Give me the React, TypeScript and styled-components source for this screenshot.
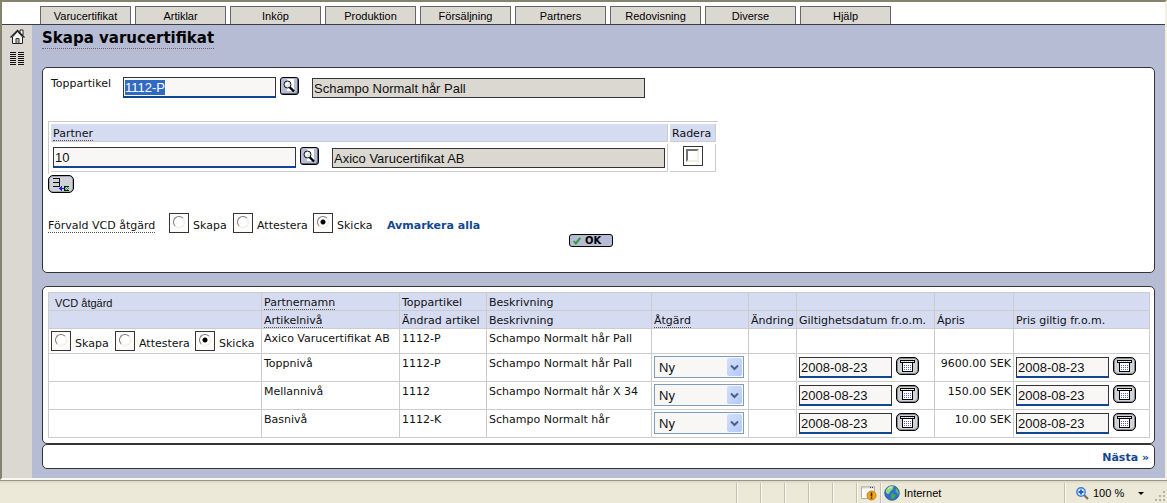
import React, { useEffect, useRef } from "react";
import styled, { createGlobalStyle } from "styled-components";

const sans = `"Liberation Sans", Arial, sans-serif`;
const wide = `"DejaVu Sans", Verdana, sans-serif`;
const ink = "#333338";
const line = "#cccccc";

const GlobalStyle = createGlobalStyle`
  *, *::before, *::after { box-sizing: border-box; }
  body { margin: 0; background: #ffffff; font-family: ${wide}; font-size: 11px; line-height: 14px; color: #111111; }
  ::selection { background: #316ac5; color: #ffffff; }
`;

const Page = styled.div`
  min-height: 100vh;
  display: flex;
  flex-direction: column;
`;

const Frame = styled.div`
  flex: 1;
  display: flex;
  flex-direction: column;
  border-top: 2px solid #85826f;
  border-left: 2px solid #85826f;
  border-right: 2px solid #f1efe2;
  border-bottom: 2px solid #f8f7f0;
`;

const TabBar = styled.nav`
  display: flex;
  gap: 4px;
  padding: 4px 0 0 38px;
  border-bottom: 1px solid #3c3c46;
`;

const Tab = styled.a`
  width: 91px;
  height: 18px;
  border: 1px solid #666666;
  border-bottom: 0;
  background: #dbd8d1;
  color: #000000;
  font-family: ${sans};
  line-height: 19px;
  text-align: center;
  text-decoration: none;
`;

const Body = styled.div`
  flex: 1;
  display: flex;
`;

const Sidebar = styled.aside`
  width: 30px;
  display: flex;
  flex-direction: column;
  align-items: center;
  gap: 8px;
  padding-top: 4px;
  background: #dbd8d1;
`;

const SideLink = styled.a`
  display: block;
  height: 15px;
  svg { display: block; }
`;

const Main = styled.main`
  flex: 1;
  min-width: 0;
  padding: 4px 10px 9px;
  background: #b6bcd3;
`;

const Title = styled.h1`
  width: fit-content;
  margin: 0 0 18px;
  border-bottom: 1px dotted #666666;
  color: #000000;
  font-size: 15px;
  font-weight: bold;
  line-height: 19px;
`;

const Panel = styled.section<{ $gap?: number }>`
  margin-bottom: ${(p) => p.$gap ?? 0}px;
  padding: 5px;
  border: 1px solid ${ink};
  border-radius: 5px;
  background: #ffffff;
`;

const FormBody = styled.form`
  padding: 4px 0 20px;
`;

const FieldRow = styled.div`
  display: flex;
  align-items: flex-start;
`;

const TopRow = styled(FieldRow)`
  margin-bottom: 23px;
  padding-left: 3px;
`;

const FieldLabel = styled.label`
  width: 72px;
`;

const TextInput = styled.input<{ $width: number }>`
  width: ${(p) => p.$width}px;
  height: 21px;
  padding: 0 1px;
  border: 1px solid ${ink};
  border-bottom: 2px solid #11478f;
  border-radius: 0;
  outline: none;
  background: #f8f7f6;
  color: #111111;
  font-family: ${sans};
  font-size: 13px;
`;

const ReadOnlyInput = styled.input`
  width: 333px;
  height: 20px;
  margin: 1px 0 0 13px;
  padding: 0 1px;
  border: 1px solid ${ink};
  border-radius: 0;
  outline: none;
  background: #dbd8d1;
  color: #111111;
  font-family: ${sans};
  font-size: 13px;
`;

const IconButton = styled.button<{ $width: number; $tone: string }>`
  flex: none;
  width: ${(p) => p.$width}px;
  height: 18px;
  display: flex;
  align-items: center;
  justify-content: center;
  padding: 0;
  border: 1px solid #000000;
  border-radius: 5px;
  background: ${(p) => p.$tone};
`;

const SearchButton = styled(IconButton)`
  margin-left: 4px;
  border-radius: 3px;
  box-shadow: inset -1px -1px 0 #5c6078;
`;

const CalendarButton = styled(IconButton)`
  margin-left: 4px;
  box-shadow: inset 0 0 0 1px #8b8b92;
`;

const PartnerTable = styled.table`
  border: 0 solid ${line};
  border-width: 1px 0 0 1px;
  border-spacing: 2px;
`;

const PartnerHead = styled.th`
  min-width: 46px;
  padding: 3px 2px 0;
  border: 0 solid ${line};
  border-width: 0 1px 1px 0;
  background: #d5dbf1;
  font-weight: normal;
  text-align: left;
`;

const PartnerCell = styled.td`
  padding: 3px 2px;
  border: 0 solid ${line};
  border-width: 0 1px 1px 0;
  vertical-align: top;
`;

const Term = styled.span`
  display: inline-block;
  border-bottom: 1px dotted #555555;
  line-height: 12px;
`;

const Check = styled.input`
  appearance: none;
  display: block;
  width: 20px;
  height: 20px;
  margin: -1px auto 0;
  padding: 2px;
  border: 1px solid ${ink};
  background: #ffffff;
  &::before {
    content: "";
    display: block;
    width: 13px;
    height: 13px;
    border: 2px solid #f1efe2;
    border-top-color: #76746a;
    border-left-color: #76746a;
  }
`;

const AddButton = styled(IconButton)`
  margin: 1px 0 20px;
  box-shadow: inset 0 0 0 1px #a4a6b0;
`;

const Choices = styled.div`
  display: flex;
  align-items: center;
  gap: 4px;
`;

const ChoiceText = styled.span<{ $width?: number }>`
  min-width: ${(p) => p.$width ?? 0}px;
  padding-top: 6px;
  line-height: 14px;
  white-space: nowrap;
`;

const ChoiceLabel = styled.label`
  display: flex;
  align-items: center;
  gap: 4px;
`;

const Radio = styled.input`
  appearance: none;
  width: 20px;
  height: 20px;
  margin: 0;
  padding: 2px 3px;
  border: 1px solid ${ink};
  background: #fcfbfa;
  &::before {
    content: "";
    display: block;
    width: 12px;
    height: 12px;
    border: 1px solid #efede2;
    border-top-color: #7c7a6e;
    border-left-color: #7c7a6e;
    border-radius: 50%;
    background: #ffffff;
  }
  &:checked::before {
    background: radial-gradient(circle at 5px 5px, #000000 2px, #ffffff 3px);
  }
`;

const ChoiceCaption = styled(ChoiceText)`
  margin-right: 4px;
`;

const ActionLink = styled.a`
  color: #14478f;
  font-weight: bold;
  text-decoration: none;
`;

const ClearLink = styled(ActionLink)`
  margin-left: 6px;
  padding-top: 6px;
`;

const SubmitRow = styled.div`
  display: flex;
  justify-content: center;
  padding: 1px 15px 0 0;
`;

const OkButton = styled.button`
  width: 44px;
  height: 13px;
  display: flex;
  align-items: center;
  gap: 4px;
  padding: 0 0 0 3px;
  border: 1px solid #000000;
  border-radius: 3px;
  background: #b6bcd3;
  color: #000000;
  font-family: ${wide};
  font-size: 10px;
  font-weight: bold;
  line-height: 11px;
`;

const DataTable = styled.table`
  width: 100%;
  table-layout: fixed;
  border-collapse: collapse;
  white-space: nowrap;
`;

const HeadCell = styled.th<{ $plain?: boolean }>`
  height: 18px;
  padding: 3px 2px 0 ${(p) => (p.$plain ? 6 : 2)}px;
  border: 1px solid ${line};
  background: #d5dbf1;
  font-family: ${(p) => (p.$plain ? sans : wide)};
  font-weight: normal;
  text-align: left;
`;

const Cell = styled.td<{ $right?: boolean }>`
  padding: 2px;
  border: 1px solid ${line};
  line-height: 16px;
  text-align: ${(p) => (p.$right ? "right" : "left")};
  vertical-align: top;
`;

const DateField = styled(FieldRow)`
  padding: 1px 0;
`;

const SelectBox = styled.div`
  display: flex;
  align-items: stretch;
  width: 90px;
  height: 22px;
  border: 1px solid #7f9db9;
  background: #f8f7f6;
  position: relative;
`;

const Select = styled.select`
  appearance: none;
  flex: 1;
  padding: 0 0 0 4px;
  border: 0;
  outline: none;
  background: transparent;
  color: #111111;
  font-family: ${sans};
  font-size: 13px;
`;

const SelectArrow = styled.span`
  position: absolute;
  inset: 1px 1px 1px auto;
  width: 15px;
  display: flex;
  align-items: center;
  justify-content: center;
  border-radius: 2px;
  background: linear-gradient(135deg, #d3e0fd, #b4c9f8);
  pointer-events: none;
`;

const PagerPanel = styled(Panel)`
  display: flex;
  justify-content: flex-end;
  padding: 6px 5px 3px;
`;

const StatusBar = styled.footer`
  height: 23px;
  display: flex;
  justify-content: flex-end;
  border-top: 1px solid #9a9788;
  background: linear-gradient(#d9d6c6, #ebe8d7 3px, #ece9d8);
  color: #000000;
  font-family: ${sans};
`;

const Segment = styled.div<{ $width: number }>`
  width: ${(p) => p.$width}px;
  display: flex;
  align-items: center;
  gap: 4px;
  margin-top: 2px;
  padding-left: 3px;
  border-left: 1px solid #c3c0b0;
  box-shadow: inset 1px 0 0 #fbfaf4;
`;

const ZoomSegment = styled(Segment)`
  padding-left: 11px;
`;

const ZoomArrow = styled.span`
  margin-left: 10px;
  border: 3px solid transparent;
  border-top-color: #000000;
  border-bottom: 0;
`;

const Grip = styled.svg`
  align-self: flex-end;
  margin-left: auto;
`;

const HomeIcon = () => (
  <svg width="15" height="15" viewBox="0 0 15 15">
    <path d="M10 1h3v5h-3z" fill="#fff" stroke="#222" />
    <path d="M2.5 8v6.500h10V8L7.500 2.500z" fill="#f4f4f0" stroke="#222" />
    <path d="M.5 8.500l7-7 7 7" fill="none" stroke="#222" strokeWidth="1.300" />
    <path d="M6 14V9.500h3V14" fill="#b7b7b7" stroke="#333" />
  </svg>
);

const ListIcon = () => (
  <svg width="14" height="14" viewBox="0 0 14 14" shapeRendering="crispEdges">
    {[0, 2, 4, 6, 8, 10, 12].map((y) => (
      <path key={y} d={`M0 ${y + 0.5}h6M8 ${y + 0.5}h6`} stroke="#111" />
    ))}
  </svg>
);

const SearchIcon = () => (
  <svg width="15" height="14" viewBox="0 0 15 14">
    <path d="M5 0h7v12H5z" fill="#fff" />
    <path d="M7.500 8l4.500 4.500" stroke="#000" strokeWidth="2.400" />
    <circle cx="5.500" cy="5.500" r="3.500" fill="#dfe6ea" stroke="#111" />
    <path d="M3.500 6l2.500-2.500" stroke="#fff" strokeWidth="1.400" />
  </svg>
);

const AddRowIcon = () => (
  <svg width="22" height="14" viewBox="0 0 22 14" shapeRendering="crispEdges">
    <path d="M3 1h7v1H3zM3 5h7v1H3zM3 9h7v1H3zM9 1h1v9H9z" fill="#111" />
    <path d="M9 11h5v1H9zM10 10h1v3h-1zM11 9h1v5h-1z" fill="#2222cc" />
    <path d="M14 9h5v1h-5zM14 9h1v5h-1zM14 13h5v1h-5z" fill="#111" />
    <path d="M15 10h4v3h-4z" fill="#a9edaa" />
    <path d="M15 10h1v1h-1zM17 10h1v1h-1zM16 11h1v1h-1zM18 11h1v1h-1zM15 12h1v1h-1zM17 12h1v1h-1z" fill="#27a62f" />
  </svg>
);

const CalendarIcon = () => (
  <svg width="15" height="12" viewBox="0 0 15 12" shapeRendering="crispEdges">
    <path d="M2 3h11v9H2z" fill="#fff" />
    <path d="M0 0h15v1H0zM0 2h15v1H0zM0 0h1v3H0zM14 0h1v3h-1zM2 3h1v9H2zM12 3h1v9h-1zM2 11h11v1H2z" fill="#000" />
    <path d="M1 1.500h13" stroke="#fff" strokeDasharray="1 1" />
    <path d="M4 5.500h7M4 7.500h7M4 9.500h7" stroke="#5566bb" strokeDasharray="1 1" />
  </svg>
);

const TickIcon = () => (
  <svg width="8" height="8" viewBox="0 0 8 8">
    <path d="M.8 4l2 2.500L7.300 1" fill="none" stroke="#2f9e3c" strokeWidth="2" />
  </svg>
);

const ChevronIcon = () => (
  <svg width="9" height="7" viewBox="0 0 9 7">
    <path d="M1 1.500l3.500 3.500L8 1.500" fill="none" stroke="#4d6185" strokeWidth="2" />
  </svg>
);

const WarningPageIcon = () => (
  <svg width="17" height="16" viewBox="0 0 17 16">
    <path d="M1.500 1.500h13v12h-13z" fill="#fff" stroke="#b0aea4" />
    <path d="M2 2.500h12" stroke="#d0d0cc" strokeWidth="2" />
    <path d="M10 2.500h1M12 2.500h1" stroke="#444" />
    <circle cx="11.500" cy="10.500" r="4.500" fill="#f0a51c" stroke="#c77d10" />
    <path d="M11.500 7.500v4M11.500 12.300v1.500" stroke="#3a2500" strokeWidth="1.600" />
  </svg>
);

const GlobeIcon = () => (
  <svg width="16" height="16" viewBox="0 0 16 16">
    <circle cx="8" cy="8" r="7.300" fill="#2f6fd0" stroke="#2a5696" strokeWidth=".8" />
    <path d="M2 5C3.500 1.500 7 .6 9.500 1.300 9.500 3 9 4.500 7.500 5.500 6 6 6 8 4.500 9 2.500 9 1.500 7 2 5z" fill="#8fdc7c" />
    <path d="M7 9c2-1 5 0 4.500 2C10 12 10 14 8.500 14.800 6.500 13 7.500 11 7 9z" fill="#3fae48" />
    <path d="M12 3c2 1.500 3 4 2.500 6.500C13 9 12.500 7 11.500 6z" fill="#55c054" />
    <path d="M4 4c1.500-2 3-2 4-2" stroke="#d8f5d0" fill="none" />
  </svg>
);

const MagnifierIcon = () => (
  <svg width="13" height="13" viewBox="0 0 13 13">
    <path d="M8 8l4 4" stroke="#7a6a58" strokeWidth="2.200" />
    <circle cx="5" cy="5" r="4.200" fill="#dcecff" stroke="#3d7fd6" strokeWidth="1.400" />
    <path d="M5 2.500v5M2.500 5h5" stroke="#1d5fc4" strokeWidth="1.800" />
  </svg>
);

const tabs = ["Varucertifikat", "Artiklar", "Inköp", "Produktion", "Försäljning", "Partners", "Redovisning", "Diverse", "Hjälp"];
const columns = [213, 138, 87, 165, 97, 48, 138, 79, 136];
const choices = [
  { text: "Skapa", width: 36 },
  { text: "Attestera", width: 52 },
  { text: "Skicka", width: 40 },
];
const levels = [
  { level: "Toppnivå", article: "1112-P", text: "Schampo Normalt hår Pall", price: "9600.00 SEK" },
  { level: "Mellannivå", article: "1112", text: "Schampo Normalt hår X 34", price: "150.00 SEK" },
  { level: "Basnivå", article: "1112-K", text: "Schampo Normalt hår", price: "10.00 SEK" },
];

const ActionChoices = ({ name }: { name: string }) => (
  <>
    {choices.map(({ text, width }) => (
      <ChoiceLabel key={text}>
        <Radio type="radio" name={name} defaultChecked={text === "Skicka"} />
        <ChoiceText $width={width}>{text}</ChoiceText>
      </ChoiceLabel>
    ))}
  </>
);

const Search = ({ label }: { label: string }) => (
  <SearchButton type="button" $width={19} $tone="#b6bcd3" aria-label={label}>
    <SearchIcon />
  </SearchButton>
);

const DateInput = ({ label }: { label: string }) => (
  <DateField>
    <TextInput $width={93} defaultValue="2008-08-23" aria-label={label} />
    <CalendarButton type="button" $width={23} $tone="#d2d3d6" aria-label={`Kalender ${label}`}>
      <CalendarIcon />
    </CalendarButton>
  </DateField>
);

export default function App() {
  const article = useRef<HTMLInputElement>(null);

  useEffect(() => {
    article.current?.focus();
    article.current?.select();
  }, []);

  return (
    <Page>
      <GlobalStyle />
      <Frame>
        <TabBar>
          {tabs.map((tab) => (
            <Tab key={tab} href="#">{tab}</Tab>
          ))}
        </TabBar>
        <Body>
          <Sidebar>
            <SideLink href="#" aria-label="Hem"><HomeIcon /></SideLink>
            <SideLink href="#" aria-label="Lista"><ListIcon /></SideLink>
          </Sidebar>
          <Main>
            <Title>Skapa varucertifikat</Title>
            <Panel $gap={13}>
              <FormBody onSubmit={(e) => e.preventDefault()}>
                <TopRow>
                  <FieldLabel htmlFor="article">Toppartikel</FieldLabel>
                  <TextInput id="article" ref={article} $width={153} defaultValue="1112-P" />
                  <Search label="Sök toppartikel" />
                  <ReadOnlyInput readOnly value="Schampo Normalt hår Pall" aria-label="Beskrivning" />
                </TopRow>
                <PartnerTable>
                  <thead>
                    <tr>
                      <PartnerHead><Term as="label" htmlFor="partner">Partner</Term></PartnerHead>
                      <PartnerHead><label htmlFor="remove">Radera</label></PartnerHead>
                    </tr>
                  </thead>
                  <tbody>
                    <tr>
                      <PartnerCell>
                        <FieldRow>
                          <TextInput id="partner" $width={243} defaultValue="10" />
                          <Search label="Sök partner" />
                          <ReadOnlyInput readOnly value="Axico Varucertifikat AB" aria-label="Partnernamn" />
                        </FieldRow>
                      </PartnerCell>
                      <PartnerCell><Check id="remove" type="checkbox" /></PartnerCell>
                    </tr>
                  </tbody>
                </PartnerTable>
                <AddButton type="button" $width={26} $tone="#cfd1d8" aria-label="Lägg till rad">
                  <AddRowIcon />
                </AddButton>
                <Choices>
                  <ChoiceCaption $width={113}><Term>Förvald VCD åtgärd</Term></ChoiceCaption>
                  <ActionChoices name="default-action" />
                  <ClearLink href="#">Avmarkera alla</ClearLink>
                </Choices>
                <SubmitRow>
                  <OkButton type="submit"><TickIcon />OK</OkButton>
                </SubmitRow>
              </FormBody>
            </Panel>
            <Panel>
              <DataTable>
                <colgroup>
                  {columns.map((width, i) => <col key={i} width={width} />)}
                </colgroup>
                <thead>
                  <tr>
                    <HeadCell $plain>VCD åtgärd</HeadCell>
                    <HeadCell><Term>Partnernamn</Term></HeadCell>
                    <HeadCell>Toppartikel</HeadCell>
                    <HeadCell>Beskrivning</HeadCell>
                    <HeadCell /><HeadCell /><HeadCell /><HeadCell /><HeadCell />
                  </tr>
                  <tr>
                    <HeadCell />
                    <HeadCell><Term>Artikelnivå</Term></HeadCell>
                    <HeadCell>Ändrad artikel</HeadCell>
                    <HeadCell>Beskrivning</HeadCell>
                    <HeadCell><Term>Åtgärd</Term></HeadCell>
                    <HeadCell>Ändring</HeadCell>
                    <HeadCell>Giltighetsdatum fr.o.m.</HeadCell>
                    <HeadCell>Ápris</HeadCell>
                    <HeadCell>Pris giltig fr.o.m.</HeadCell>
                  </tr>
                </thead>
                <tbody>
                  <tr>
                    <Cell><Choices><ActionChoices name="row-action" /></Choices></Cell>
                    <Cell>Axico Varucertifikat AB</Cell>
                    <Cell>1112-P</Cell>
                    <Cell>Schampo Normalt hår Pall</Cell>
                    <Cell /><Cell /><Cell /><Cell /><Cell />
                  </tr>
                  {levels.map((row) => (
                    <tr key={row.level}>
                      <Cell />
                      <Cell>{row.level}</Cell>
                      <Cell>{row.article}</Cell>
                      <Cell>{row.text}</Cell>
                      <Cell>
                        <SelectBox>
                          <Select aria-label={`Åtgärd ${row.level}`}><option>Ny</option></Select>
                          <SelectArrow><ChevronIcon /></SelectArrow>
                        </SelectBox>
                      </Cell>
                      <Cell />
                      <Cell><DateInput label={`Giltighetsdatum ${row.level}`} /></Cell>
                      <Cell $right>{row.price}</Cell>
                      <Cell><DateInput label={`Pris giltig ${row.level}`} /></Cell>
                    </tr>
                  ))}
                </tbody>
              </DataTable>
            </Panel>
            <PagerPanel>
              <ActionLink href="#">Nästa »</ActionLink>
            </PagerPanel>
          </Main>
        </Body>
      </Frame>
      <StatusBar>
        {[0, 1, 2, 3, 4].map((i) => <Segment key={i} $width={24} />)}
        <Segment $width={24}><WarningPageIcon /></Segment>
        <Segment $width={184}><GlobeIcon />Internet</Segment>
        <ZoomSegment $width={103}>
          <MagnifierIcon />100 %<ZoomArrow />
          <Grip width="12" height="12" viewBox="0 0 12 12" shapeRendering="crispEdges">
            <path d="M8 0h2v2H8zM4 4h2v2H4zM8 4h2v2H8zM0 8h2v2H0zM4 8h2v2H4zM8 8h2v2H8z" fill="#b8b4a2" />
          </Grip>
        </ZoomSegment>
      </StatusBar>
    </Page>
  );
}
